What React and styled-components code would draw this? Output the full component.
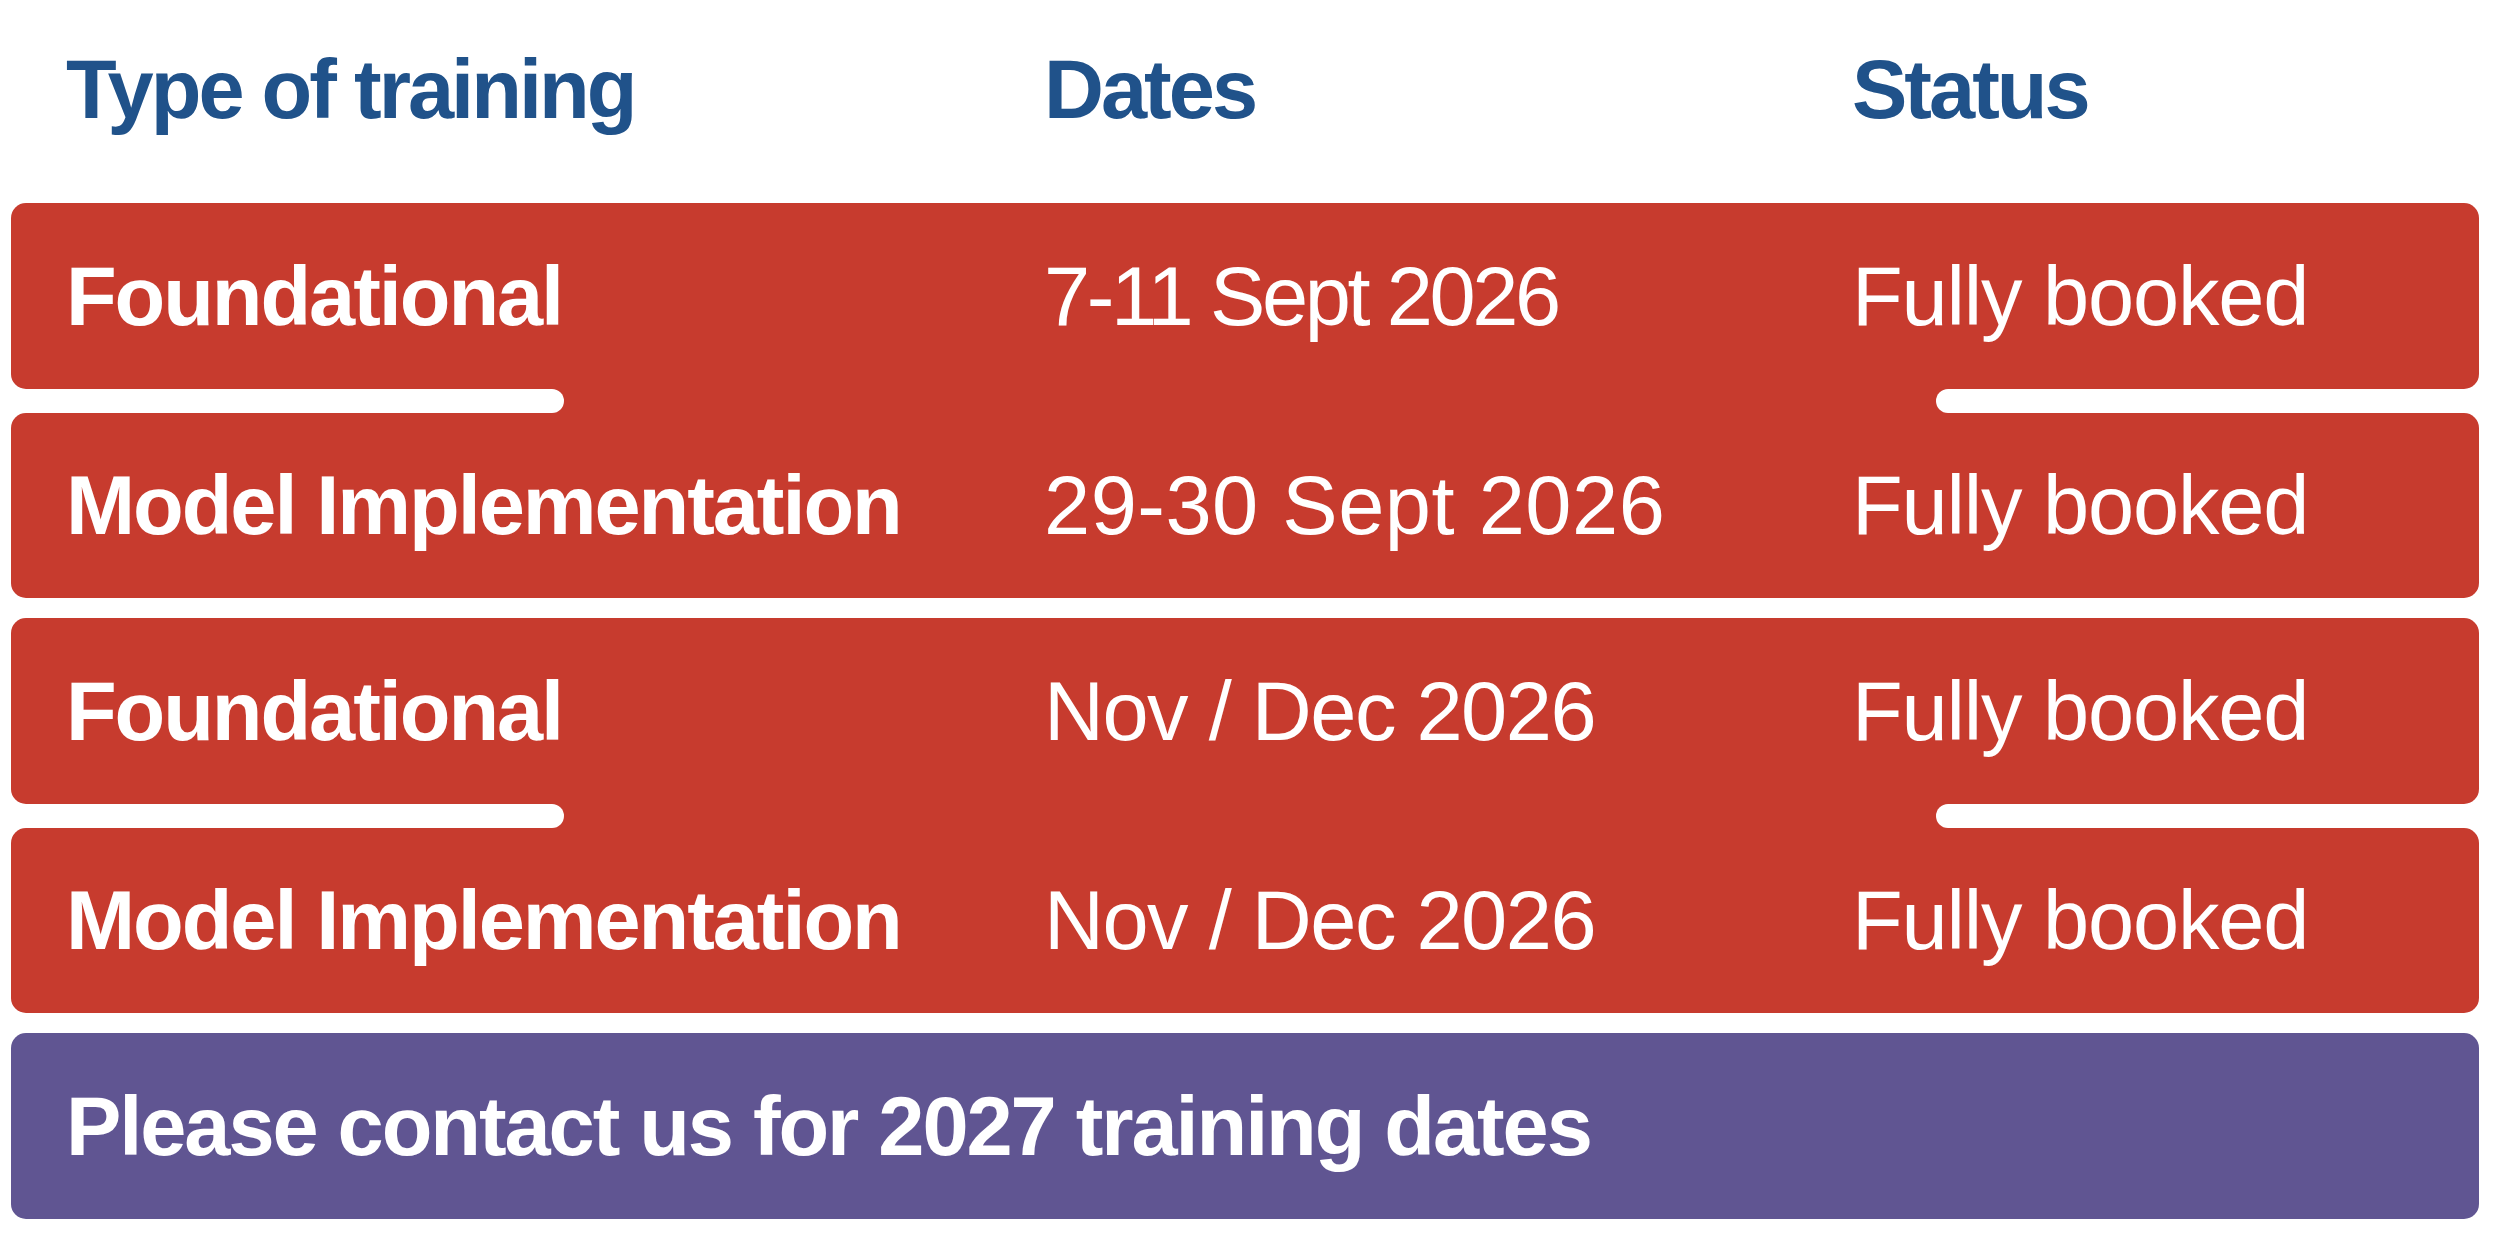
import React from "react";
import styled, { createGlobalStyle } from "styled-components";

const red = "#c73b2e";
const blue = "#20528a";
const purple = "#605592";

const GlobalStyle = createGlobalStyle`
  html, body {
    margin: 0;
    padding: 0;
    background: #ffffff;
  }
  body {
    font-family: "Liberation Sans", Arial, sans-serif;
  }
`;

const Page = styled.div`
  width: 2500px;
  padding: 48px 21px 0 11px;
  box-sizing: border-box;
`;

const Grid = styled.div`
  display: grid;
  grid-template-columns: 978px 808px 1fr;
  align-items: center;
  padding-left: 55px;
  box-sizing: border-box;
  font-size: 83px;
  line-height: 1;
  letter-spacing: -0.025em;
`;

const Header = styled(Grid)`
  color: ${blue};
  font-weight: 700;
  letter-spacing: -3px;
  margin-bottom: 72px;
`;

const Pair = styled.div`
  display: flex;
  flex-direction: column;
  margin-bottom: 20px;
`;

const Row = styled(Grid)`
  height: 186px;
  background: ${red};
  color: #ffffff;
  border-radius: 15px;

  &:last-child {
    height: 185px;
  }
`;

const Divider = styled.div`
  display: flex;
  justify-content: space-between;
  height: 24px;
  background: ${red};
`;

const Notch = styled.div`
  width: ${(p) => p.$w}px;
  height: 100%;
  background: #ffffff;
  border-radius: ${(p) => (p.$side === "left" ? "0 12px 12px 0" : "12px 0 0 12px")};
`;

const Name = styled.span`
  font-weight: 700;
  white-space: nowrap;
`;

const Cell = styled.span`
  font-weight: 400;
  white-space: nowrap;
  letter-spacing: ${(p) => p.$track}px;
`;

const Contact = styled(Grid)`
  margin-top: 2px;
  height: 186px;
  background: ${purple};
  color: #ffffff;
  border-radius: 15px;
  font-weight: 700;
  grid-template-columns: 1fr;
`;

const trainings = [
  [
    { name: "Foundational", dates: "7-11 Sept 2026", track: -3.4, status: "Fully booked" },
    { name: "Model Implementation", dates: "29-30 Sept 2026", track: 0.5, status: "Fully booked" },
  ],
  [
    { name: "Foundational", dates: "Nov / Dec 2026", track: -1.5, status: "Fully booked" },
    { name: "Model Implementation", dates: "Nov / Dec 2026", track: -1.5, status: "Fully booked" },
  ],
];

function TrainingRow({ item }) {
  return (
    <Row>
      <Name>{item.name}</Name>
      <Cell $track={item.track}>{item.dates}</Cell>
      <Cell $track={-1.2}>{item.status}</Cell>
    </Row>
  );
}

export default function App() {
  return (
    <Page>
      <GlobalStyle />
      <Header>
        <span>Type of training</span>
        <span>Dates</span>
        <span>Status</span>
      </Header>
      {trainings.map((pair, i) => (
        <Pair key={i}>
          <TrainingRow item={pair[0]} />
          <Divider>
            <Notch $side="left" $w={553} />
            <Notch $side="right" $w={543} />
          </Divider>
          <TrainingRow item={pair[1]} />
        </Pair>
      ))}
      <Contact>
        <span>Please contact us for 2027 training dates</span>
      </Contact>
    </Page>
  );
}
